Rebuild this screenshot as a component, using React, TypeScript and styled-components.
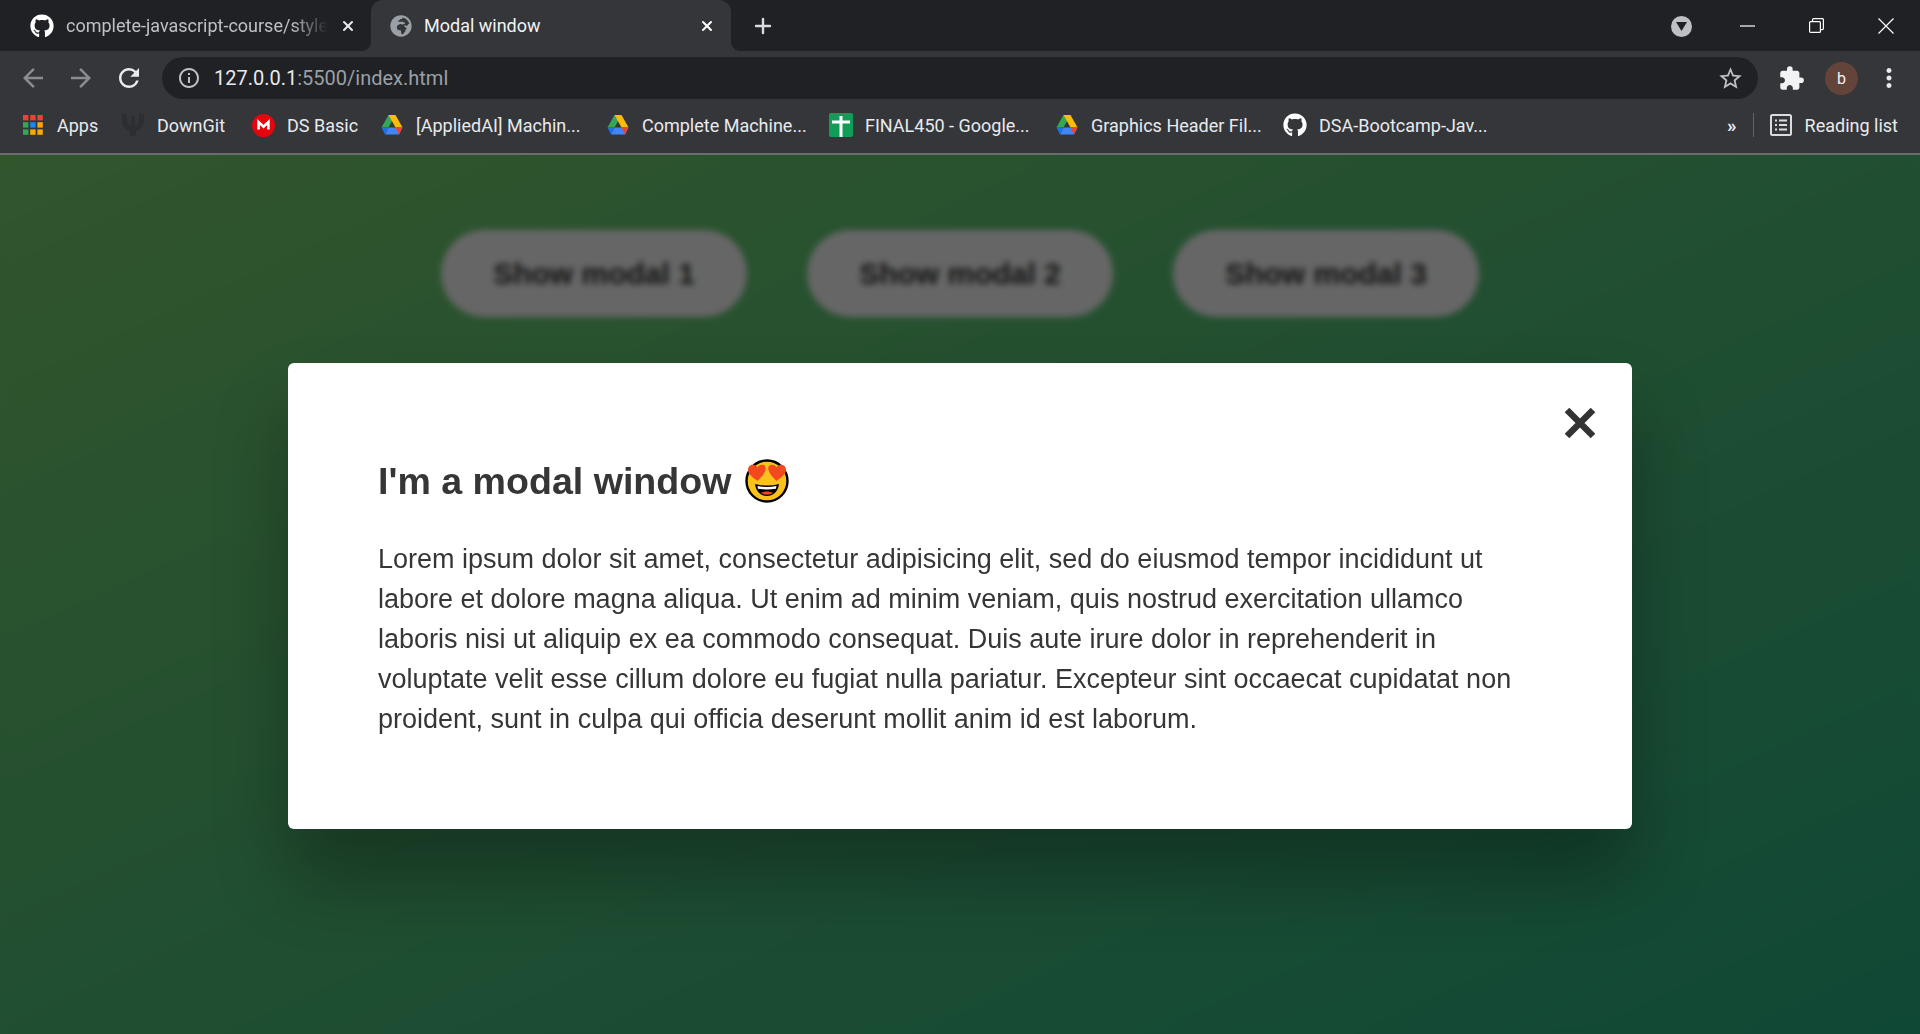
import { Plus, X } from 'lucide-react';
import { FaGithub, FaGlobeAfrica } from 'react-icons/fa';
import { MdArrowBack, MdArrowForward, MdExtension, MdInfoOutline, MdMoreVert, MdRefresh, MdStarBorder } from 'react-icons/md';
import styled, { createGlobalStyle } from 'styled-components';

const GlobalStyle = createGlobalStyle`
  * {
    box-sizing: border-box;
  }

  html,
  body {
    margin: 0;
    height: 100%;
    overflow: hidden;
  }

  body {
    font-family: 'Liberation Sans', Arial, sans-serif;
    color: #363636;
  }
`;

const Frame = styled.div`
  width: 1920px;
  height: 1034px;
  display: flex;
  flex-direction: column;
`;

const Chrome = styled.header`
  flex: none;
  background: #35363a;
  border-bottom: 2px solid #6b6c6e;
  font-family: Roboto, sans-serif;
  color: #e8eaed;
`;

const TabStrip = styled.div`
  height: 51px;
  display: flex;
  align-items: stretch;
  background: #202124;
  padding-left: 30px;
`;

const Tab = styled.div<{ $active?: boolean }>`
  position: relative;
  display: flex;
  align-items: center;
  width: ${p => (p.$active ? '360px' : '341px')};
  padding-left: ${p => (p.$active ? '19px' : '0')};
  padding-right: ${p => (p.$active ? '16px' : '15px')};
  background: ${p => (p.$active ? '#35363a' : 'transparent')};
  border-radius: 12px 12px 0 0;
  color: ${p => (p.$active ? '#f1f3f4' : '#bdc1c6')};

  ${p =>
    p.$active &&
    `
    &::before,
    &::after {
      content: '';
      position: absolute;
      bottom: 0;
      width: 10px;
      height: 10px;
    }
    &::before {
      left: -10px;
      background: radial-gradient(circle at 0 0, transparent 10px, #35363a 10.5px);
    }
    &::after {
      right: -10px;
      background: radial-gradient(circle at 100% 0, transparent 10px, #35363a 10.5px);
    }
  `}
`;

const TabTitle = styled.span<{ $fade?: boolean }>`
  flex: 1;
  min-width: 0;
  margin-left: 12px;
  margin-right: ${p => (p.$fade ? '12px' : '0')};
  font-size: 18px;
  white-space: nowrap;
  ${p =>
    p.$fade &&
    `
    -webkit-mask-image: linear-gradient(to right, #000 86%, transparent 100%);
    mask-image: linear-gradient(to right, #000 86%, transparent 100%);
  `}
`;

const NewTab = styled.div`
  display: flex;
  align-items: center;
  margin-left: 20px;
  color: #dadce0;
`;

const WindowArea = styled.div`
  margin-left: auto;
  display: flex;
  align-items: center;
  height: 100%;
`;

const ProfileDrop = styled.div`
  width: 21px;
  height: 21px;
  margin: 2px 21px 0 0;
  border-radius: 50%;
  background: #bdc1c6;
  display: flex;
  align-items: center;
  justify-content: center;
`;

const WindowButton = styled.div`
  width: 69px;
  height: 42px;
  display: flex;
  align-items: center;
  justify-content: center;
`;

const Toolbar = styled.div`
  height: 54px;
  display: flex;
  align-items: center;
  padding: 0 21px 0 21px;

  svg {
    flex: none;
  }
`;

const NavButton = styled.div<{ $dim?: boolean }>`
  width: 24px;
  height: 24px;
  margin-right: 24px;
  display: flex;
  align-items: center;
  justify-content: center;
  color: ${p => (p.$dim ? '#8a8c90' : '#e8eaed')};
`;

const Omnibox = styled.div`
  flex: none;
  width: 1596px;
  height: 42px;
  margin-left: -3px;
  border-radius: 21px;
  background: #202124;
  display: flex;
  align-items: center;
  padding: 0 14px 0 15px;
  font-size: 20px;
`;

const UrlHost = styled.span`
  color: #e8eaed;
  margin-left: 13px;
`;

const UrlPath = styled.span`
  color: #9aa0a6;
`;

const OmniActions = styled.div`
  margin-left: auto;
  display: flex;
  align-items: center;
  color: #bdc1c6;
`;

const ToolIcons = styled.div`
  display: flex;
  align-items: center;
  margin-left: 20px;
`;

const Avatar = styled.div`
  width: 33px;
  height: 33px;
  margin: 0 16px 0 20px;
  border-radius: 50%;
  background: #63443a;
  color: #f1f3f4;
  font-size: 16px;
  display: flex;
  align-items: center;
  justify-content: center;
`;

const Bookmarks = styled.nav`
  height: 48px;
  display: flex;
  align-items: center;
  padding: 0 22px 8px 21px;
  font-size: 18px;
  color: #e8eaed;
`;

const Bookmark = styled.div<{ $width: number }>`
  width: ${p => p.$width}px;
  display: flex;
  align-items: center;
  gap: 12px;
  white-space: nowrap;
`;

const BookmarkIcon = styled.span`
  width: 24px;
  height: 24px;
  flex: none;
  display: flex;
  align-items: center;
  justify-content: center;
`;

const MoreBookmarks = styled.span`
  margin-left: auto;
  font-size: 19px;
  font-weight: 700;
  letter-spacing: -1px;
`;

const Separator = styled.span`
  width: 1px;
  height: 24px;
  margin: 0 16px 0 17px;
  background: #5f6368;
`;

const ReadingList = styled.div`
  display: flex;
  align-items: center;
  gap: 13px;
`;

const Page = styled.main`
  position: relative;
  flex: 1;
  overflow: hidden;
  background: linear-gradient(to top left, #28b487, #7dd56f);
`;

const ButtonRow = styled.div`
  display: flex;
  justify-content: center;
  gap: 60px;
  padding-top: 75px;
`;

const ShowButton = styled.button`
  width: 306px;
  height: 87px;
  border: none;
  border-radius: 44px;
  background: #fff;
  color: #333;
  font: 700 30px 'Liberation Sans', Arial, sans-serif;
`;

const Overlay = styled.div`
  position: absolute;
  inset: 0;
  background: rgba(0, 0, 0, 0.6);
  backdrop-filter: blur(3px);
`;

const Modal = styled.section`
  position: absolute;
  top: 208px;
  left: 288px;
  width: 1344px;
  height: 466px;
  padding: 96px 90px 0;
  background: #fff;
  border-radius: 6px;
  box-shadow: 0 48px 72px rgba(0, 0, 0, 0.3);
`;

const CloseButton = styled.button`
  position: absolute;
  top: 44px;
  right: 36px;
  width: 32px;
  height: 32px;
  padding: 0;
  border: none;
  background: none;
  color: #333;
`;

const Title = styled.h1`
  margin: 0 0 36px;
  display: flex;
  align-items: center;
  gap: 14px;
  height: 44px;
  font-size: 37.6px;
  font-weight: 700;
  line-height: 44px;
`;

const Body = styled.p`
  margin: 0;
  width: 1150px;
  font-size: 27px;
  line-height: 40px;
`;

const Grid = () => {
  const colours = ['#ea4335', '#ea4335', '#ea4335', '#34a853', '#1a88f0', '#fba804', '#34a853', '#fba804', '#fba804'];
  return (
    <svg width="20" height="20" viewBox="0 0 20 20">
      {colours.map((fill, i) => (
        <rect key={i} x={(i % 3) * 7.2} y={Math.floor(i / 3) * 7.2} width="5.4" height="5.4" fill={fill} />
      ))}
    </svg>
  );
};

const DownGitIcon = () => (
  <svg width="24" height="24" viewBox="0 0 24 24" fill="#2d2e31">
    <path d="M1 1h5v6c0 3 2 5 4 6V3h4v10c2-1 4-3 4-6V1h5v7c0 5-4 9-8 10v5H9v-5C5 17 1 13 1 8z" />
  </svg>
);

const MegaIcon = () => (
  <svg width="23" height="23" viewBox="0 0 23 23">
    <circle cx="11.5" cy="11.5" r="11.5" fill="#e2060f" />
    <path d="M6.6 15.6V8l4.9 4.8L16.400 8v7.600" fill="none" stroke="#fff" strokeWidth="2.6" />
  </svg>
);

const DriveIcon = () => (
  <svg width="22" height="20" viewBox="0 0 22 20">
    <path d="M7.5 0h7L7.5 12.5H0.5z" fill="#34a853" />
    <path d="M7.5 0h7l7 12.5h-7z" fill="#fbbc04" />
    <path d="M4 19.5l3.5-7h14l-3.5 7z" fill="#4285f4" />
    <path d="M0.5 12.5h7L4 19.5z" fill="#1a73e8" />
    <path d="M14.5 12.5h7l-3.5 7z" fill="#ea4335" />
  </svg>
);

const SheetIcon = () => (
  <svg width="24" height="24" viewBox="0 0 24 24">
    <rect width="24" height="24" rx="2" fill="#0f9d58" />
    <path d="M3 9h18M12 3v21" stroke="#fff" strokeWidth="3" />
  </svg>
);

const ReadingIcon = () => (
  <svg width="22" height="22" viewBox="0 0 22 22" fill="none" stroke="#dadce0" strokeWidth="2">
    <rect x="1" y="1" width="20" height="20" rx="1.5" />
    <path d="M9 6.5h8M9 11h8M9 15.5h8M5 6.5h2M5 11h2M5 15.5h2" />
  </svg>
);

const HeartEyes = () => (
  <svg width="44" height="44" viewBox="0 0 44 44">
    <circle cx="22" cy="22" r="20.5" fill="#fcc21b" stroke="#000" strokeWidth="2.4" />
    <path d="M10 25c8 2 16 2 24 0-1 8-6 12-12 12s-11-4-12-12z" fill="#000" />
    <path d="M12.5 27c6 1.2 13 1.2 19 0l-.6 2.8c-6 1-12 1-18 0z" fill="#fff" />
    <path d="M16 34c3.500-2 8.500-2 12 0-3.500 2.200-8.500 2.200-12 0z" fill="#f4481e" />
    <path d="M12.500 22C9 19 3 15.500 3 11c0-6 7-7 9.500-2.500C15 4 22 5 20.500 11c-1 4-5 8-8 11z" fill="#f4481e" />
    <path d="M31.500 22c3.500-3 9.500-6.500 9.500-11 0-6-7-7-9.500-2.500C29 4 22 5 23.500 11c1 4 5 8 8 11z" fill="#f4481e" />
  </svg>
);

const bookmarks = [
  { label: 'Apps', width: 100, icon: <Grid /> },
  { label: 'DownGit', width: 130, icon: <DownGitIcon /> },
  { label: 'DS Basic', width: 129, icon: <MegaIcon /> },
  { label: '[AppliedAI] Machin...', width: 226, icon: <DriveIcon /> },
  { label: 'Complete Machine...', width: 223, icon: <DriveIcon /> },
  { label: 'FINAL450 - Google...', width: 226, icon: <SheetIcon /> },
  { label: 'Graphics Header Fil...', width: 228, icon: <DriveIcon /> },
  { label: 'DSA-Bootcamp-Jav...', width: 226, icon: <FaGithub size={24} color="#fff" /> },
];

const App = () => (
  <Frame>
    <GlobalStyle />
    <Chrome>
      <TabStrip>
        <Tab>
          <FaGithub size={24} color="#fff" />
          <TabTitle $fade>complete-javascript-course/style</TabTitle>
          <X size={16} strokeWidth={3} color="#e8eaed" />
        </Tab>
        <Tab $active>
          <FaGlobeAfrica size={22} color="#9aa0a6" />
          <TabTitle>Modal window</TabTitle>
          <X size={16} strokeWidth={3} color="#fff" />
        </Tab>
        <NewTab>
          <Plus size={24} strokeWidth={2.4} />
        </NewTab>
        <WindowArea>
          <ProfileDrop>
            <svg width="11" height="9" viewBox="0 0 11 9">
              <path d="M0 0h11L5.500 9z" fill="#202124" />
            </svg>
          </ProfileDrop>
          <WindowButton>
            <svg width="15" height="2" viewBox="0 0 15 2">
              <path d="M0 1h15" stroke="#fff" strokeWidth="1.2" />
            </svg>
          </WindowButton>
          <WindowButton>
            <svg width="15" height="15" viewBox="0 0 15 15" fill="none" stroke="#fff" strokeWidth="1.2">
              <rect x="0.6" y="3.600" width="10.800" height="10.800" rx="1" />
              <path d="M3.600 3.600V1.600a1 1 0 0 1 1-1h9a1 1 0 0 1 .8 1v9a1 1 0 0 1-1 1h-2" />
            </svg>
          </WindowButton>
          <WindowButton>
            <svg width="16" height="16" viewBox="0 0 16 16">
              <path d="M.5.5l15 15M15.500.5l-15 15" stroke="#fff" strokeWidth="1.2" />
            </svg>
          </WindowButton>
        </WindowArea>
      </TabStrip>
      <Toolbar>
        <NavButton $dim>
          <MdArrowBack size={30} />
        </NavButton>
        <NavButton $dim>
          <MdArrowForward size={30} />
        </NavButton>
        <NavButton>
          <MdRefresh size={30} />
        </NavButton>
        <Omnibox>
          <MdInfoOutline size={24} color="#bdc1c6" />
          <UrlHost>127.0.0.1</UrlHost>
          <UrlPath>:5500/index.html</UrlPath>
          <OmniActions>
            <MdStarBorder size={27} />
          </OmniActions>
        </Omnibox>
        <ToolIcons>
          <MdExtension size={27} color="#f1f3f4" />
          <Avatar>b</Avatar>
          <MdMoreVert size={30} color="#e8eaed" />
        </ToolIcons>
      </Toolbar>
      <Bookmarks>
        {bookmarks.map(b => (
          <Bookmark key={b.label} $width={b.width}>
            <BookmarkIcon>{b.icon}</BookmarkIcon>
            {b.label}
          </Bookmark>
        ))}
        <MoreBookmarks>»</MoreBookmarks>
        <Separator />
        <ReadingList>
          <ReadingIcon />
          Reading list
        </ReadingList>
      </Bookmarks>
    </Chrome>
    <Page>
      <ButtonRow>
        <ShowButton>Show modal 1</ShowButton>
        <ShowButton>Show modal 2</ShowButton>
        <ShowButton>Show modal 3</ShowButton>
      </ButtonRow>
      <Overlay />
      <Modal>
        <CloseButton aria-label="Close">
          <svg width="32" height="32" viewBox="0 0 32 32">
            <path d="M3 3l26 26M29 3L3 29" stroke="currentColor" strokeWidth="6.500" />
          </svg>
        </CloseButton>
        <Title>
          I'm a modal window <HeartEyes />
        </Title>
        <Body>
          Lorem ipsum dolor sit amet, consectetur adipisicing elit, sed do eiusmod tempor incididunt ut labore et dolore
          magna aliqua. Ut enim ad minim veniam, quis nostrud exercitation ullamco laboris nisi ut aliquip ex ea commodo
          consequat. Duis aute irure dolor in reprehenderit in voluptate velit esse cillum dolore eu fugiat nulla
          pariatur. Excepteur sint occaecat cupidatat non proident, sunt in culpa qui officia deserunt mollit anim id est
          laborum.
        </Body>
      </Modal>
    </Page>
  </Frame>
);

export default App;
